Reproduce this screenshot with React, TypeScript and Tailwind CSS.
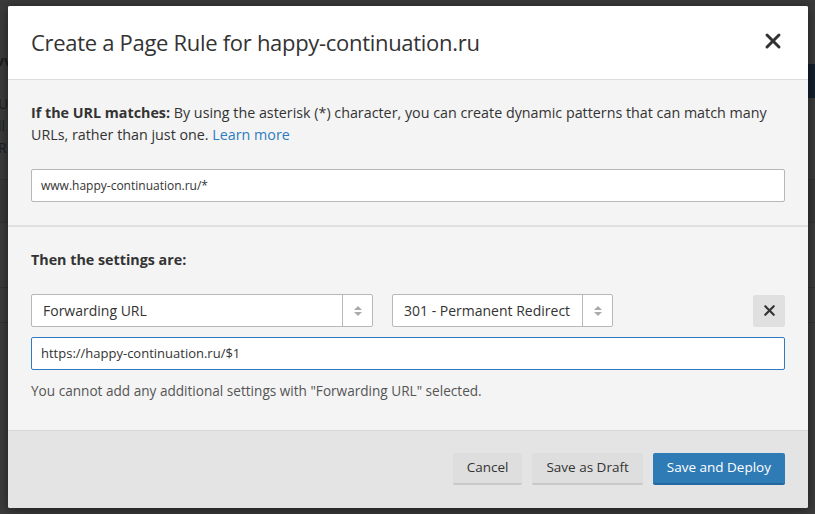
import { X } from 'lucide-react';

function SelectBox({ label, className }: { label: string; className: string }) {
  return (
    <div className={`flex h-[33px] items-stretch rounded-[2px] border border-[#b8b8b8] bg-white ${className}`}>
      <div className="flex flex-1 items-center pl-[11px] text-[14px] text-[#333]">{label}</div>
      <div className="flex w-[30px] flex-col items-center justify-center gap-[2px] border-l border-[#b8b8b8]">
        <svg width="8" height="4" viewBox="0 0 8 4"><path d="M0 4 L4 0 L8 4Z" fill="#aaa" /></svg>
        <svg width="8" height="4" viewBox="0 0 8 4"><path d="M0 0 L4 4 L8 0Z" fill="#aaa" /></svg>
      </div>
    </div>
  );
}

export default function App() {
  return (
    <div className="relative h-[514px] w-[815px] overflow-hidden bg-[#444] font-['Open_Sans',sans-serif]">
      {/* page behind the overlay */}
      <div className="absolute inset-0 bg-[#3c3c3c]">
        <div className="h-[6px] bg-[#3a3a3a]" />
        <div className="ml-[-4px] mt-[44px] text-[14px] font-bold text-[#1e1e1e]">vv</div>
        <div className="ml-[-2px] mt-[22px] text-[14px] leading-[22px] text-[#1e1e1e]">
          <div>U</div>
          <div>ll</div>
          <div>R</div>
        </div>
        <div className="mt-[20px] h-[44px] border-y border-[#333] bg-[#383838]" />
        <div className="mt-[64px] h-px bg-[#333]" />
        <div className="mt-[34px] h-px bg-[#333]" />
        <div className="absolute right-0 top-[64px] h-[34px] w-[8px] bg-[#14202c]" />
      </div>

      {/* modal */}
      <div className="absolute left-[8px] top-[6px] flex w-[800px] flex-col overflow-hidden rounded-[2px] bg-[#f4f4f4] shadow-[0_2px_12px_rgba(0,0,0,0.5)]">
        <div className="flex h-[74px] items-center justify-between border-b border-[#dcdcdc] bg-white pl-[23px] pr-[23px]">
          <h1 className="text-[22px] tracking-[-0.3px] text-[#333]">Create a Page Rule for happy-continuation.ru</h1>
          <X className="mb-[4px] h-[24px] w-[24px] text-[#333]" strokeWidth={3} />
        </div>

        <div className="border-b-2 border-[#e0e0e0] px-[23px] pb-[23px] pt-[22px]">
          <p className="text-[14.3px] leading-[22px] text-[#333]">
            <span className="font-bold">If the URL matches:</span> By using the asterisk (*) character, you can create
            dynamic patterns that can match many URLs, rather than just one.{' '}
            <span className="text-[#2f7bbf]">Learn more</span>
          </p>
          <div className="mt-[23px] flex h-[33px] items-center rounded-[2px] border border-[#b8b8b8] bg-white pl-[9px] text-[12px] text-[#333]">
            www.happy-continuation.ru/*
          </div>
        </div>

        <div className="px-[23px] pb-[29px] pt-[22px]">
          <p className="text-[14.3px] font-bold leading-[22px] text-[#333]">Then the settings are:</p>
          <div className="mt-[23px] flex items-center">
            <SelectBox label="Forwarding URL" className="w-[342px]" />
            <SelectBox label="301 - Permanent Redirect" className="ml-[19px] w-[221px]" />
            <div className="ml-auto flex h-[32px] w-[32px] items-center justify-center rounded-[2px] bg-[#e0e0e0]">
              <X className="h-[17px] w-[17px] text-[#333]" strokeWidth={3} />
            </div>
          </div>
          <div className="mt-[10px] flex h-[33px] items-center rounded-[2px] border border-[#2f7bbf] bg-white pl-[9px] text-[13px] text-[#333]">
            https://happy-continuation.ru/$1
          </div>
          <p className="mt-[11px] text-[13.6px] leading-[20px] text-[#555]">
            You cannot add any additional settings with "Forwarding URL" selected.
          </p>
        </div>

        <div className="flex h-[78px] items-center justify-end gap-[10px] border-t border-[#d8d8d8] bg-[#e4e4e4] px-[23px] pb-[2px]">
          <button className="h-[32px] rounded-[2px] border-b-2 border-[#c8c8c8] bg-[#dedede] px-[14px] text-[13.5px] text-[#333]">
            Cancel
          </button>
          <button className="h-[32px] rounded-[2px] border-b-2 border-[#c8c8c8] bg-[#dedede] px-[14px] text-[13.5px] text-[#333]">
            Save as Draft
          </button>
          <button className="h-[32px] rounded-[2px] border-b-2 border-[#2468a2] bg-[#2f7bb6] px-[14px] text-[13.5px] text-white">
            Save and Deploy
          </button>
        </div>
      </div>
    </div>
  );
}
